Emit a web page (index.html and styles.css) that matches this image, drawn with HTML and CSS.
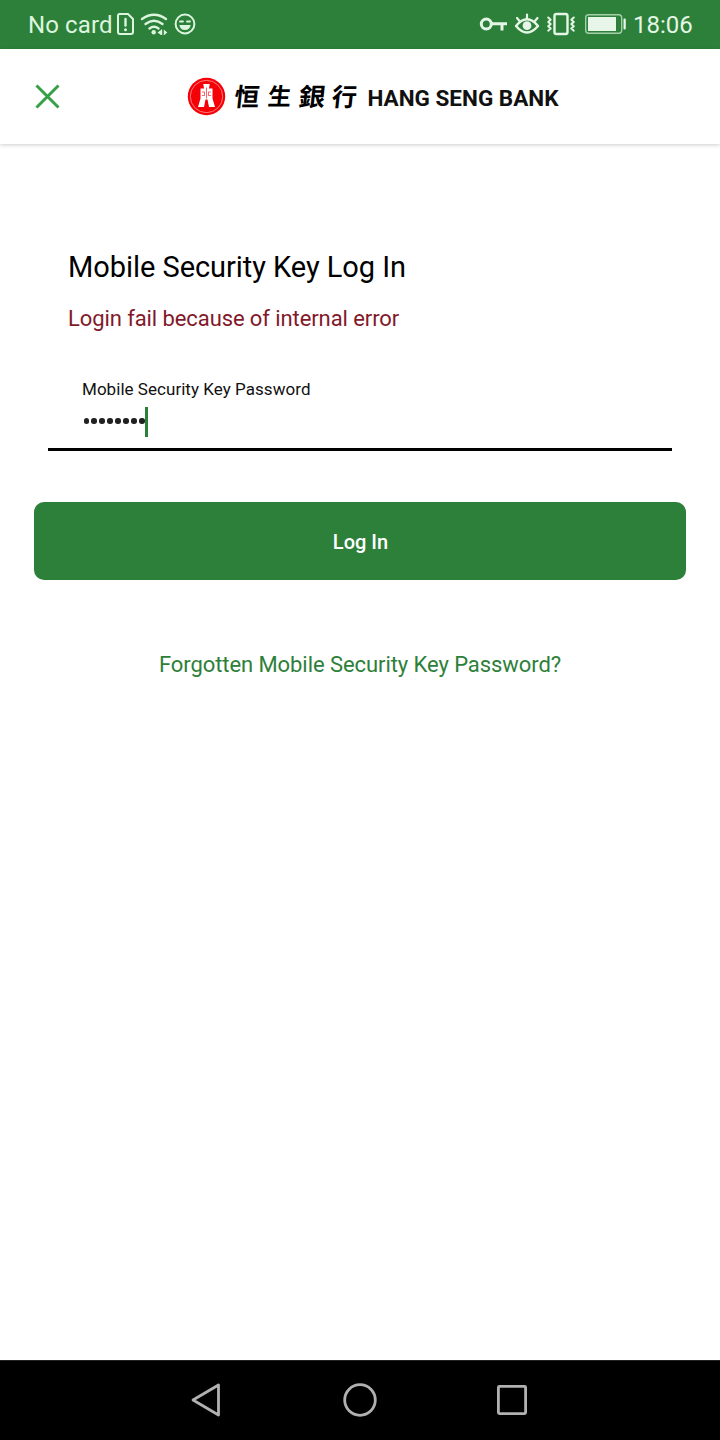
FILE: index.html
```html
<!DOCTYPE html>
<html lang="en">
<head>
<meta charset="utf-8">
<title>Mobile Security Key Log In</title>
<link rel="stylesheet" href="styles.css">
</head>
<body>
<div class="screen">
  <div class="status">
    <div class="status-left">
      <span class="carrier">No card</span>
      <svg class="status-icons" width="82" height="28" viewBox="115 10 82 28">
        <g fill="none" stroke="#dcf5df" stroke-width="2" stroke-linecap="round" stroke-linejoin="round">
          <path d="M119.500 14h8.500l5 5v13q0 2-2 2h-11q-2 0-2-2V16q0-2 1.500-2z"/>
          <path d="M125.500 19v6.500" stroke-width="2.400"/>
          <path d="M142 19q12-8.500 24 0M145.500 24q8.500-6.500 17 0M149.500 28.500q4.500-3.500 9 0" stroke-width="2.300"/>
          <circle cx="185" cy="24" r="9.400"/>
          <path d="M180 21.500h3M187 21.500h3" stroke-width="1.800"/>
        </g>
        <g fill="#dcf5df">
          <circle cx="125.500" cy="29.700" r="1.500"/>
          <circle cx="153.700" cy="32.300" r="2.200"/>
          <path d="M157.500 32.500l3.500-2.500v5zM163.800 29.500l3.500 3-3.500 3zM161 29.500h1.200v5.500H161z"/>
          <path d="M179.300 25h11.400q-.8 5-5.700 5t-5.700-5z"/>
        </g>
      </svg>
    </div>
    <div class="status-right">
      <svg class="status-icons" width="150" height="28" viewBox="478 10 150 28">
        <g fill="none" stroke="#e4f6e6" stroke-width="2.400" stroke-linecap="round" stroke-linejoin="round">
          <g stroke-width="3" stroke-linecap="butt"><circle cx="486.300" cy="24" r="5"/><path d="M491.500 23.800H507M502 24v6.500"/></g>
          <path d="M516 26q11-13.500 22 0-11 13-22 0z"/>
          <path d="M527 14.500v4M517 18l2.500 3M537.500 18l-2.500 3" stroke-width="2.200"/>
          <rect x="554.500" y="14" width="13" height="20" rx="2"/>
          <path d="M548.200 17.500l2.500 2.200-2.500 2.200 2.500 2.200-2.500 2.200 2.500 2.200-2.500 2.200M573.800 17.500l-2.500 2.200 2.500 2.200-2.500 2.200 2.500 2.200-2.500 2.200 2.500 2.200" stroke-width="2"/>
          <rect x="585.700" y="14.700" width="36" height="18.600" rx="3" stroke-width="1.400" stroke="#a5cfaa"/>
        </g>
        <g fill="#e8f5e9"><circle cx="527" cy="25.700" r="4.400"/><rect x="588" y="17" width="28" height="14"/><rect x="623.500" y="18.500" width="2.300" height="11" rx="1"/></g>
      </svg>
      <span class="clock">18:06</span>
    </div>
  </div>
  <header class="header">
    <svg class="close" width="26" height="26" viewBox="0 0 26 26"><path d="M2.500 1.500l22 22M24.500 1.500l-22 22" stroke="#35a048" stroke-width="3"/></svg>
    <svg class="logo" width="376" height="44" viewBox="186 75 376 44">
      <circle cx="206.500" cy="96.500" r="18.700" fill="#f40006"/>
      <circle cx="206.500" cy="96.500" r="16.200" fill="none" stroke="#ff9c9c" stroke-width=".8"/>
      <path d="M203.300 84h6.400l-.7 4.500h3.500v10l2.500 8.500h-6l-1.500-7.500h-2l-1.500 7.500h-6l2.500-8.500v-10h3.500z" fill="#fff"/>
      <path d="M206.500 87.500v11M202 92h2.500v3.500H202M211 92h-2.500v3.500h2.500" fill="none" stroke="#f40006" stroke-width=".6"/>
      <g class="logo-cn"><text transform="translate(233.500 106) skewX(-6)">恒</text><text transform="translate(267 105) skewX(-6) scale(.94)">生</text><text transform="translate(298 106) skewX(-6) scale(1.050 1)">銀</text><text transform="translate(331 106) skewX(-6)">行</text></g>
      <text class="logo-en" x="367.500" y="105.500" textLength="191" lengthAdjust="spacingAndGlyphs">HANG SENG BANK</text>
    </svg>
  </header>
  <main class="main">
    <h1 class="title">Mobile Security Key Log In</h1>
    <p class="error">Login fail because of internal error</p>
    <div class="field">
      <label class="label">Mobile Security Key Password</label>
      <div class="entry"><span class="dots"><i></i><i></i><i></i><i></i><i></i><i></i><i></i><i></i></span><span class="caret"></span></div>
    </div>
    <button class="login">Log In</button>
    <a class="forgot">Forgotten Mobile Security Key Password?</a>
  </main>
  <nav class="nav">
    <svg width="32" height="40" viewBox="190 1380 32 40"><path d="M218.500 1385v30L193 1400z"/></svg>
    <svg width="40" height="40" viewBox="340 1380 40 40"><circle cx="360" cy="1400" r="15.300"/></svg>
    <svg width="32" height="40" viewBox="496 1380 32 40"><rect x="498.400" y="1386.400" width="27.200" height="27.200" rx="1"/></svg>
  </nav>
</div>
</body>
</html>
```
FILE: styles.css
```css
* { box-sizing: border-box; }
body { margin: 0; background: #fff; font-family: Roboto, "Noto Sans CJK TC", sans-serif; }
svg { display: block; flex: none; }
.screen { width: 720px; height: 1440px; display: flex; flex-direction: column; background: #fff; }
.status { height: 49px; background: #2d8039; color: #dcf5df; display: flex; justify-content: space-between; padding: 0 28px; font-size: 24px; line-height: 50px; white-space: nowrap; }
.status-left, .status-right { display: flex; }
.status-icons { margin-top: 10px; }
.carrier { width: 87px; letter-spacing: .1px; }
.clock { width: 59px; margin-left: 5px; color: #e4f6e6; }
.header { height: 95px; display: flex; align-items: center; padding-left: 34px; background: #fff; box-shadow: 0 1px 4px rgba(0, 0, 0, .2); }
.logo { margin-left: 126px; }
.logo-cn { font-family: "Noto Sans CJK TC", sans-serif; font-size: 25px; font-weight: 700; }
.logo-en { font-family: Roboto, sans-serif; font-size: 21.500px; font-weight: 700; fill: #111; }
.main { flex: 1; display: flex; flex-direction: column; padding: 103px 34px 0; }
.title { margin: 0 34px; font-size: 29px; font-weight: 400; line-height: 40px; letter-spacing: -.05px; color: #000; white-space: nowrap; }
.error { margin: 17px 34px 0; font-size: 22px; line-height: 30px; letter-spacing: -.09px; color: #82192a; }
.field { margin: 39px 14px 0; height: 78px; padding-left: 34px; border-bottom: 3px solid #000; }
.label { display: block; font-size: 17px; line-height: 32px; letter-spacing: .04px; color: #111; }
.entry { display: flex; align-items: center; height: 30px; margin-top: 2px; }
.dots { display: flex; gap: 2.600px; width: 63px; padding: 0 0 2px 1.500px; }
.dots i { flex: none; width: 5.400px; height: 5.400px; border-radius: 50%; background: #222; }
.caret { position: relative; width: 3px; height: 30px; background: #2d8039; }
.login { margin-top: 51px; height: 78px; border: 0; border-radius: 10px; background: #2d8039; color: #fff; font: 500 20px/76px Roboto, sans-serif; padding: 2px 0 0 1px; }
.forgot { margin-top: 70px; text-align: center; font-size: 22px; line-height: 30px; letter-spacing: -.07px; color: #2d8039; }
.nav { height: 80px; background: #000; border-top: 1px solid #222; display: flex; align-items: center; padding: 0 0 2px 190px; }
.nav svg { fill: none; stroke: #b1b1b1; stroke-width: 2.800; stroke-linejoin: round; }
.nav svg:nth-child(2) { margin-left: 118px; }
.nav svg:nth-child(3) { margin-left: 116px; }
```
